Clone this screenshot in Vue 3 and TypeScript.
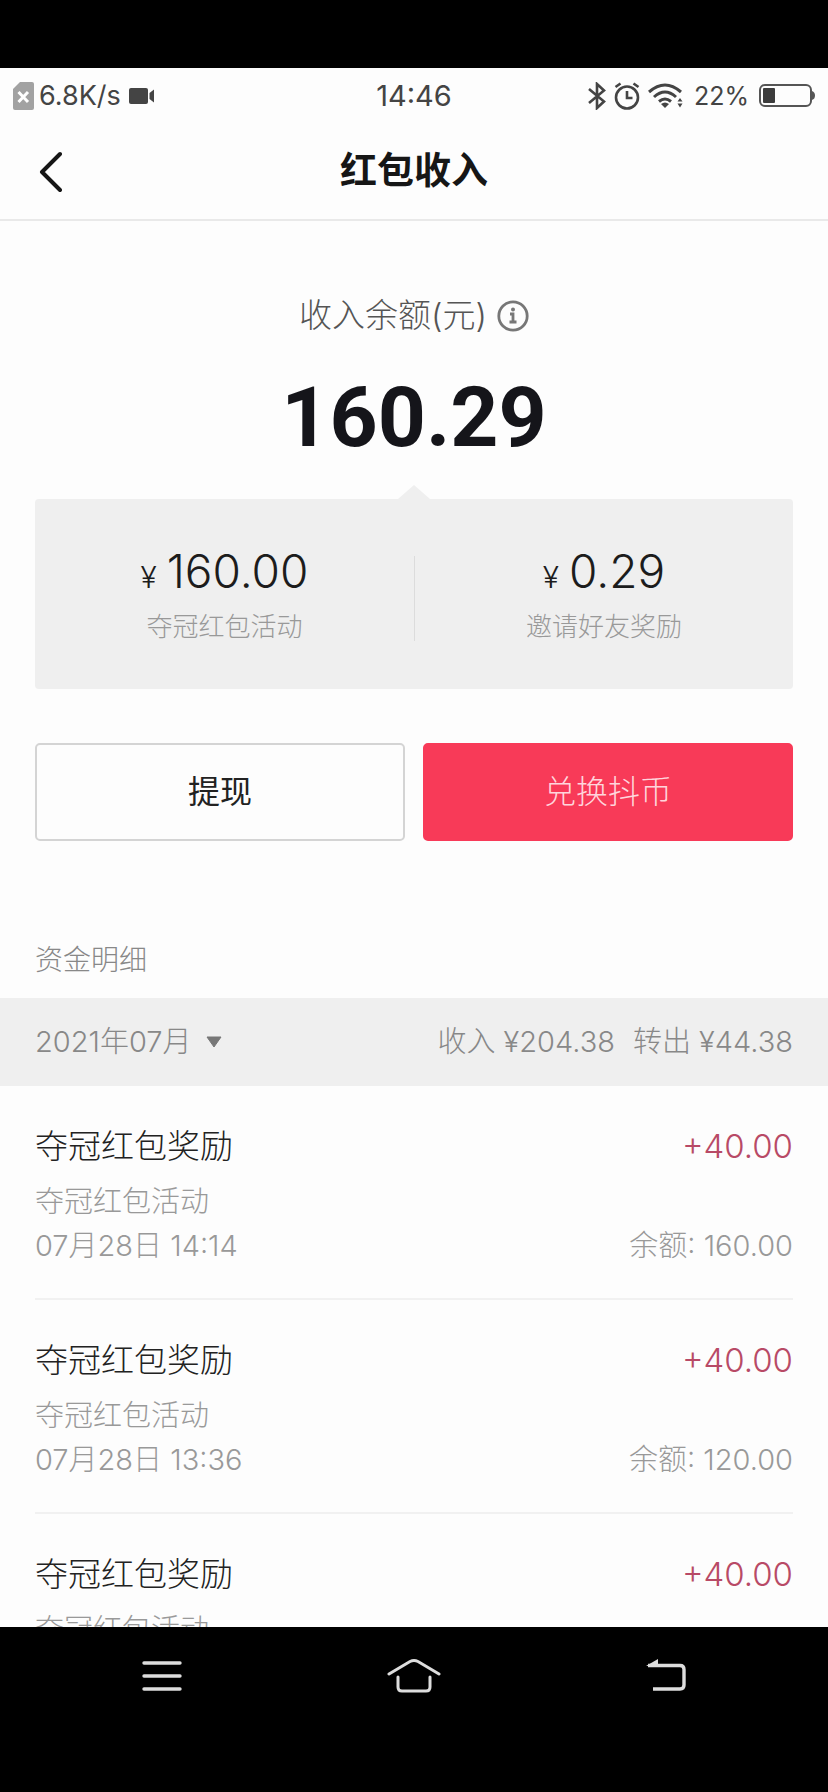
<script setup lang="ts">
import { ref } from 'vue'

interface Source {
  amount: string
  name: string
}

interface Entry {
  id: number
  title: string
  activity: string
  amount: string
  time?: string
  balance?: string
}

const month = ref('2021年07月')

const sources: Source[] = [
  { amount: '160.00', name: '夺冠红包活动' },
  { amount: '0.29', name: '邀请好友奖励' },
]

const entries: Entry[] = [
  { id: 1, title: '夺冠红包奖励', activity: '夺冠红包活动', amount: '+40.00', time: '07月28日 14:14', balance: '160.00' },
  { id: 2, title: '夺冠红包奖励', activity: '夺冠红包活动', amount: '+40.00', time: '07月28日 13:36', balance: '120.00' },
  { id: 3, title: '夺冠红包奖励', activity: '夺冠红包活动', amount: '+40.00' },
]
</script>

<template>
  <div class="screen">
    <div class="status">
      <div class="status-side">
        <svg width="22" height="28" viewBox="0 0 22 28" aria-hidden="true">
          <path d="M7 0H19Q21 0 21 2V26Q21 28 19 28H2Q0 28 0 26V7Z" fill="#a2a2a2" />
          <path d="M5.500 10L15 20M15 10L5.500 20" stroke="#fff" stroke-width="3" fill="none" />
        </svg>
        <span class="speed">6.8K/s</span>
        <svg width="26" height="18" viewBox="0 0 26 18" aria-hidden="true">
          <rect x="0" y="1" width="19" height="16" rx="2" fill="#444" />
          <path d="M20.500 6L25 2.500V15.500L20.500 12Z" fill="#444" />
        </svg>
      </div>
      <span class="clock">14:46</span>
      <div class="status-side end">
        <svg width="18" height="28" viewBox="0 0 18 28" fill="none" stroke="#444" stroke-width="2.600" aria-hidden="true">
          <path d="M1 7L16 19.500L9 26V2L16 8.500L1 21" />
        </svg>
        <svg class="alarm" width="26" height="28" viewBox="0 0 26 28" fill="none" stroke="#444" stroke-width="2.600" aria-hidden="true">
          <circle cx="13" cy="15.500" r="11" />
          <path d="M13 9V16H18.500M1.500 5L6.500 1.500M24.500 5L19.500 1.500" />
        </svg>
        <svg width="36" height="26" viewBox="0 0 36 26" fill="none" stroke="#444" stroke-width="3" aria-hidden="true">
          <path d="M1 9Q17 -5 33 9M6 14Q17 4 28 14M11 18.500Q17 13.500 23 18.500" />
          <path d="M13 21Q17 18 21 21L17 25Z" fill="#444" stroke="none" />
          <path d="M32 15L34.500 18.500H29.500ZM29.500 20.500H34.500L32 24.500Z" fill="#444" stroke="none" />
        </svg>
        <span class="percent">22%</span>
        <svg width="56" height="24" viewBox="0 0 56 24" aria-hidden="true">
          <rect x="1" y="1" width="51" height="21" rx="5" fill="none" stroke="#555" stroke-width="2" />
          <rect x="4" y="4" width="12" height="15" rx="1" fill="#3c3c3c" />
          <path d="M53 7Q56 8 56 11.500T53 16Z" fill="#555" />
        </svg>
      </div>
    </div>

    <header class="titlebar">
      <button class="back" type="button" aria-label="返回">
        <svg width="24" height="42" viewBox="0 0 24 42" fill="none" stroke="#161616" stroke-width="4" stroke-linecap="round" stroke-linejoin="round" aria-hidden="true">
          <path d="M22 3L4 21L22 39" />
        </svg>
      </button>
      <h1>红包收入</h1>
    </header>

    <main>
      <section class="balance">
        <div class="balance-label">
          <span>收入余额(元)</span>
          <button class="info" type="button" aria-label="说明">
            <svg width="32" height="32" viewBox="0 0 32 32" fill="none" stroke="#777" stroke-width="2.800" aria-hidden="true">
              <circle cx="16" cy="16" r="14.200" />
              <path d="M13 14H16V22M12.500 22H19.500" />
              <circle cx="16" cy="9.500" r="2" fill="#777" stroke="none" />
            </svg>
          </button>
        </div>
        <strong class="total">160.29</strong>
        <div class="sources">
          <div v-for="source in sources" :key="source.name" class="source">
            <p class="source-amount"><span class="yen">¥</span>{{ source.amount }}</p>
            <p class="source-name">{{ source.name }}</p>
          </div>
        </div>
        <div class="actions">
          <button class="action" type="button">提现</button>
          <button class="action primary" type="button">兑换抖币</button>
        </div>
      </section>

      <section>
        <h2>资金明细</h2>
        <div class="summary">
          <label class="month">
            <select v-model="month" aria-label="月份">
              <option>2021年07月</option>
            </select>
            <svg width="16" height="12" viewBox="0 0 16 12" aria-hidden="true">
              <path d="M1 1H15L8 11Z" fill="#777" stroke="#777" stroke-linejoin="round" />
            </svg>
          </label>
          <p class="flows"><span>收入 ¥204.38</span><span>转出 ¥44.38</span></p>
        </div>
        <ul class="entries">
          <li v-for="entry in entries" :key="entry.id" class="entry">
            <div class="line entry-head">
              <span>{{ entry.title }}</span>
              <span class="gain">{{ entry.amount }}</span>
            </div>
            <p class="activity">{{ entry.activity }}</p>
            <div v-if="entry.time" class="line meta">
              <time>{{ entry.time }}</time>
              <span>余额: {{ entry.balance }}</span>
            </div>
          </li>
        </ul>
      </section>
    </main>

    <nav class="softkeys">
      <button type="button" aria-label="菜单">
        <svg width="54" height="36" viewBox="0 0 54 36" fill="none" stroke="#ddd" stroke-width="3.400" stroke-linecap="round" aria-hidden="true">
          <path d="M9 5H45M9 18H45M9 31H45" />
        </svg>
      </button>
      <button type="button" aria-label="主页">
        <svg width="54" height="36" viewBox="0 0 54 36" fill="none" stroke="#ddd" stroke-width="3" stroke-linecap="round" aria-hidden="true">
          <path d="M2 16L23 3.500Q27 1.500 31 3.500L52 16M11 19V29Q11 33 15 33H39Q43 33 43 29V19" />
        </svg>
      </button>
      <button type="button" aria-label="后退">
        <svg width="54" height="36" viewBox="0 0 54 36" fill="none" stroke="#ddd" stroke-width="3.400" aria-hidden="true">
          <path d="M9 7.500H41Q45 7.500 45 11.500V27Q45 31 41 31H14" />
          <path d="M7 8L19 1V8Z" fill="#ddd" stroke="none" />
        </svg>
      </button>
    </nav>
  </div>
</template>

<style>
body {
  margin: 0;
  background: #000;
}
</style>

<style scoped>
.screen {
  display: flex;
  flex-direction: column;
  box-sizing: border-box;
  height: 100vh;
  padding-top: 68px;
  background: #000;
  color: #222;
  font-family: Inter, "Noto Sans CJK SC", sans-serif;
  font-weight: 300;
  line-height: 1.2;
}

p,
h1,
h2,
ul {
  margin: 0;
  padding: 0;
}

button {
  padding: 0;
  border: 0;
  background: none;
  font: inherit;
  cursor: pointer;
}

svg {
  display: block;
  flex: none;
}

.status {
  display: grid;
  grid-template-columns: 1fr auto 1fr;
  align-items: center;
  height: 56px;
  padding: 0 13px;
  background: #fdfdfd;
  color: #444;
  font-size: 27px;
  font-weight: 400;
}

.status-side {
  display: flex;
  align-items: center;
}

.status-side.end {
  justify-content: flex-end;
}

.speed {
  margin: 0 8px 0 4px;
}

.clock {
  font-size: 29px;
}

.alarm {
  margin: 0 8px;
}

.percent {
  margin: 0 10px;
  font-size: 25px;
}

.titlebar {
  display: grid;
  grid-template-columns: 1fr auto 1fr;
  align-items: center;
  height: 95px;
  padding: 0 38px;
  border-bottom: 2px solid #e9e9e9;
  background: #fdfdfd;
}

.back {
  justify-self: start;
}

h1 {
  color: #161616;
  font-size: 37px;
  font-weight: 700;
}

main {
  flex: 1;
  min-height: 0;
  overflow: hidden;
  background: #fdfdfd;
}

.balance {
  padding: 71px 35px 0;
}

.balance-label {
  display: flex;
  justify-content: center;
  align-items: center;
  gap: 10px;
  height: 48px;
  color: #555;
  font-size: 33px;
}

.total {
  display: block;
  margin: 28px 0 31px;
  color: #15151a;
  font-family: Roboto, sans-serif;
  font-size: 84px;
  font-weight: 700;
  line-height: 100px;
  text-align: center;
}

.sources {
  position: relative;
  display: grid;
  grid-template-columns: 1fr 1fr;
  padding: 57px 0 48px;
  border-radius: 4px;
  background: #efefef;
  text-align: center;
}

.sources::before {
  content: "";
  position: absolute;
  bottom: 100%;
  left: 50%;
  margin-left: -16px;
  border: 16px solid transparent;
  border-top: 0;
  border-bottom: 14px solid #efefef;
}

.source + .source {
  border-left: 1px solid #dcdcdc;
}

.source-amount {
  color: #1c1c1c;
  font-size: 46px;
  line-height: 30px;
}

.yen {
  margin-right: 10px;
  font-size: 30px;
  line-height: 0;
}

.source-name {
  margin-top: 27px;
  color: #999;
  font-size: 26px;
  line-height: 28px;
}

.actions {
  display: grid;
  grid-template-columns: 1fr 1fr;
  gap: 18px;
  margin-top: 54px;
}

.action {
  height: 98px;
  border: 2px solid #d4d4d4;
  border-radius: 5px;
  color: #222;
  font-size: 32px;
  font-weight: 400;
}

.action.primary {
  border-color: #f83a58;
  background: #f83a58;
  color: #ffd5dc;
  font-weight: 300;
}

h2 {
  padding: 98px 35px 17px;
  color: #888;
  font-size: 28px;
  font-weight: 300;
  line-height: 42px;
}

.summary {
  display: flex;
  justify-content: space-between;
  align-items: center;
  height: 88px;
  padding: 0 35px;
  background: #efefef;
  color: #888;
  font-size: 29px;
}

.month {
  display: flex;
  align-items: center;
  gap: 14px;
}

select {
  appearance: none;
  padding: 0;
  border: 0;
  background: none;
  color: inherit;
  font: inherit;
}

.flows {
  display: flex;
  gap: 18px;
}

.entries {
  padding: 0 35px;
  list-style: none;
}

.entry {
  padding: 36px 0 30px;
}

.entry + .entry {
  border-top: 2px solid #f1f1f1;
}

.line {
  display: flex;
  justify-content: space-between;
}

.entry-head {
  font-size: 33px;
  line-height: 48px;
}

.gain {
  color: #b84a66;
}

.activity,
.meta {
  color: #999;
  font-size: 29px;
  line-height: 44px;
}

.activity {
  margin-top: 10px;
}

.softkeys {
  display: grid;
  grid-template-columns: repeat(3, 1fr);
  align-items: start;
  height: 134px;
  padding: 31px 36px 0;
  background: #000;
}

.softkeys button {
  justify-self: center;
}
</style>
